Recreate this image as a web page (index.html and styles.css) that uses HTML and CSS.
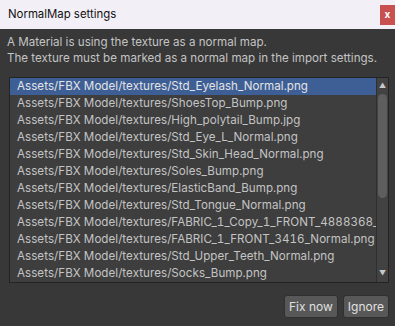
FILE: index.html
```html
<!DOCTYPE html>
<html lang="en">

<head>
  <meta charset="UTF-8">
  <title>NormalMap settings</title>
  <link rel="stylesheet" href="styles.css">
</head>

<body>
  <div class="window">
    <div class="titlebar">
      <span class="title">NormalMap settings</span>
      <span class="close">x</span>
    </div>

    <div class="content">
      <p class="message">
        A Material is using the texture as a normal map.<br>
        The texture must be marked as a normal map in the import settings.
      </p>

      <div class="listbox">
        <ul class="items">
          <li class="selected">Assets/FBX Model/textures/Std_Eyelash_Normal.png</li>
          <li>Assets/FBX Model/textures/ShoesTop_Bump.png</li>
          <li>Assets/FBX Model/textures/High_polytail_Bump.jpg</li>
          <li>Assets/FBX Model/textures/Std_Eye_L_Normal.png</li>
          <li>Assets/FBX Model/textures/Std_Skin_Head_Normal.png</li>
          <li>Assets/FBX Model/textures/Soles_Bump.png</li>
          <li>Assets/FBX Model/textures/ElasticBand_Bump.png</li>
          <li>Assets/FBX Model/textures/Std_Tongue_Normal.png</li>
          <li>Assets/FBX Model/textures/FABRIC_1_Copy_1_FRONT_4888368_Normal.png</li>
          <li>Assets/FBX Model/textures/FABRIC_1_FRONT_3416_Normal.png</li>
          <li>Assets/FBX Model/textures/Std_Upper_Teeth_Normal.png</li>
          <li>Assets/FBX Model/textures/Socks_Bump.png</li>
        </ul>
        <div class="scrollbar">
          <span class="arrow">&#9650;</span>
          <div class="track"><div class="thumb"></div></div>
          <span class="arrow">&#9660;</span>
        </div>
      </div>

      <div class="buttons">
        <button class="btn">Fix now</button>
        <button class="btn">Ignore</button>
      </div>
    </div>
  </div>
</body>

</html>
```

FILE: styles.css
```css
body {
  margin: 0;
  padding: 0;
  font-family: Inter, "Noto Sans", sans-serif;
  background-color: #383838;
}

.window {
  width: 395px;
  height: 326px;
  display: flex;
  flex-direction: column;
}

.titlebar {
  height: 29px;
  flex-shrink: 0;
  background-color: #f2eff6;
  display: flex;
  justify-content: space-between;
  align-items: flex-start;
}

.title {
  color: #111;
  font-size: 11.4px;
  line-height: 29px;
  padding-left: 8px;
}

.close {
  margin-top: 5px;
  width: 15px;
  height: 20px;
  background-color: #c8504f;
  color: #fff;
  font-size: 10px;
  font-weight: bold;
  line-height: 19px;
  text-align: center;
}

.content {
  flex: 1;
  padding: 0 6px 0 9px;
  display: flex;
  flex-direction: column;
}

.message {
  margin: 5px 0 0 -2px;
  color: #c4c4c4;
  font-size: 11.6px;
  line-height: 16px;
  white-space: nowrap;
}

.listbox {
  margin-top: 11px;
  height: 204px;
  flex-shrink: 0;
  border: 1px solid #232323;
  background-color: #3e3e3e;
  display: flex;
  overflow: hidden;
}

.items {
  flex: 1;
  min-width: 0;
  margin: 0;
  padding: 0;
  list-style: none;
  overflow: hidden;
}

.items li {
  height: 17px;
  line-height: 17px;
  padding-left: 7px;
  color: #c4c4c4;
  font-size: 11.6px;
  font-variant-numeric: tabular-nums;
  letter-spacing: 0.04px;
  white-space: nowrap;
  overflow: hidden;
}

.items li.selected {
  background-color: #3e5f96;
  color: #e4e4e4;
}

.scrollbar {
  width: 11px;
  flex-shrink: 0;
  background-color: #424242;
  border-left: 1px solid #2f2f2f;
  display: flex;
  flex-direction: column;
  align-items: center;
}

.arrow {
  color: #c8c8c8;
  font-size: 7px;
  height: 16px;
  line-height: 16px;
}

.track {
  flex: 1;
  width: 100%;
}

.thumb {
  margin: 0 1px;
  height: 104px;
  border-radius: 5px;
  background-color: #5e5e5e;
}

.buttons {
  display: flex;
  justify-content: flex-end;
  gap: 5px;
  margin-top: 12px;
}

.btn {
  font-family: Inter, "Noto Sans", sans-serif;
  font-size: 12px;
  color: #e0e0e0;
  background-color: #585858;
  border: 1px solid #303030;
  border-radius: 3px;
  height: 23px;
  padding: 0 4px;
}
```
